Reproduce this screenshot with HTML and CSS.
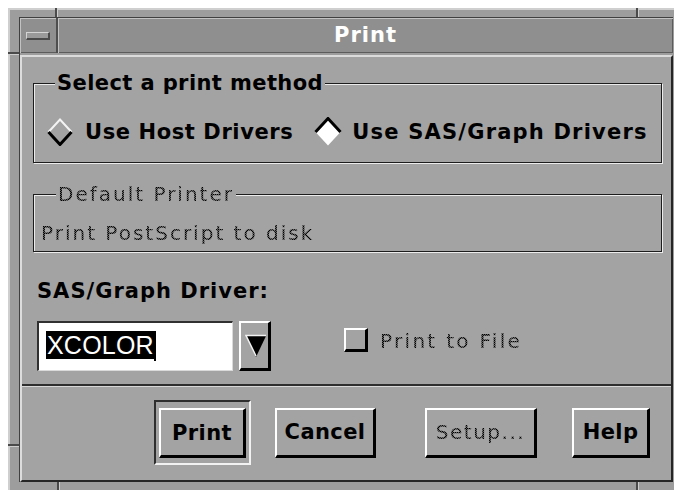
FILE: index.html
```html
<!DOCTYPE html>
<html lang="en">
<head>
<meta charset="utf-8">
<title>Print</title>
<link rel="stylesheet" href="styles.css">
</head>
<body>
<div class="window">
  <!-- resize-handle notches cut into the window frame -->
  <span class="notch notch-v notch-top-left"></span>
  <span class="notch notch-v notch-top-right"></span>
  <span class="notch notch-h notch-left-top"></span>
  <span class="notch notch-h notch-left-bottom"></span>
  <span class="notch notch-v notch-bottom-left"></span>
  <span class="notch notch-v notch-bottom-right"></span>

  <div class="frame-body">
    <div class="titlebar">
      <div class="menu-btn"><span class="menu-bar"></span></div>
      <div class="title">Print</div>
    </div>

    <div class="client">
      <fieldset class="group method">
        <legend class="legend">Select a print method</legend>
        <div class="radios">
          <label class="radio">
            <svg class="diamond" width="26" height="28" viewBox="0 0 26 28">
              <polyline points="1.5,14 13,1.5 24.5,14" fill="none" stroke="#f4f4f4" stroke-width="2"/>
              <polyline points="1.5,14 13,26.5 24.5,14" fill="none" stroke="#000" stroke-width="3"/>
            </svg>
            <span>Use Host Drivers</span>
          </label>
          <label class="radio radio-on">
            <svg class="diamond" width="28" height="30" viewBox="0 0 28 30">
              <polygon points="1.5,15 14,1.5 26.5,15 14,28.5" fill="#fff"/>
              <polyline points="1.5,15 14,1.5 26.5,15" fill="none" stroke="#000" stroke-width="3"/>
            </svg>
            <span>Use SAS/Graph Drivers</span>
          </label>
        </div>
      </fieldset>

      <fieldset class="group printer">
        <legend class="legend legend-off"><span class="stipple">Default Printer</span></legend>
        <div class="printer-name stipple">Print PostScript to disk</div>
      </fieldset>

      <div class="driver-label">SAS/Graph Driver:</div>

      <div class="driver-row">
        <div class="combo">
          <div class="field"><span class="sel">XCOLOR</span><span class="caret"></span></div>
          <div class="drop">
            <svg width="22" height="24" viewBox="0 0 22 24">
              <polygon points="1,2 21,2 11,23" fill="#000"/>
              <polyline points="11,22 1,1.5 21,1.5" fill="none" stroke="#f2f2f2" stroke-width="1.5"/>
            </svg>
          </div>
        </div>
        <div class="check">
          <span class="checkbox"></span>
          <span class="check-text stipple">Print to File</span>
        </div>
      </div>

      <div class="separator"></div>

      <div class="actions">
        <div class="default-frame"><button class="btn btn-print">Print</button></div>
        <button class="btn btn-cancel">Cancel</button>
        <button class="btn btn-setup"><span class="stipple">Setup...</span></button>
        <button class="btn btn-help">Help</button>
      </div>
    </div>
  </div>
</div>
</body>
</html>
```

FILE: styles.css
```css
* { box-sizing: border-box; }

html, body { margin: 0; padding: 0; }

body {
  width: 674px;
  height: 490px;
  overflow: hidden;
  background: #ffffff;
  font-family: "DejaVu Sans", "Liberation Sans", sans-serif;
  color: #000;
}

/* window-manager frame */
.window {
  position: relative;
  margin: 8px 0 0 8px;
  width: 690px;
  height: 500px;
  background: #9d9d9d;
  border-top: 2px solid #cfcfcf;
  border-left: 2px solid #cfcfcf;
  padding: 7px 0 0 9px;
}

.notch { position: absolute; }
.notch-v {
  width: 3px;
  height: 9px;
  border-left: 2px solid #4a4a4a;
  border-right: 1px solid #cdcdcd;
}
.notch-h {
  width: 11px;
  height: 3px;
  border-top: 2px solid #4a4a4a;
  border-bottom: 1px solid #cdcdcd;
  left: -2px;
}
.notch-top-left { left: 45px; top: -2px; }
.notch-top-right { left: 626px; top: -2px; }
.notch-left-top { top: 42px; }
.notch-left-bottom { top: 434px; }
.notch-bottom-left { left: 47px; top: 472px; height: 12px; }
.notch-bottom-right { left: 626px; top: 472px; height: 12px; }

.frame-body {
  width: 654px;
  border-left: 1px solid #404040;
  border-top: 1px solid #404040;
}

/* title bar */
.titlebar {
  display: flex;
  height: 35px;
  background: #8f8f8f;
  box-shadow: inset 1px 1px 0 #c2c2c2, inset -1px -1px 0 #5c5c5c;
}

.menu-btn {
  width: 38px;
  display: flex;
  align-items: center;
  justify-content: center;
  border-right: 2px solid #4e4e4e;
  box-shadow: 1px 0 0 #c2c2c2;
}

.menu-bar {
  width: 24px;
  height: 8px;
  background: #9a9a9a;
  border-top: 1px solid #d4d4d4;
  border-left: 1px solid #d4d4d4;
  border-bottom: 2px solid #4a4a4a;
  border-right: 2px solid #4a4a4a;
}

.title {
  flex: 1;
  text-align: center;
  color: #fff;
  font-weight: bold;
  font-size: 21px;
  line-height: 35px;
  letter-spacing: 1px;
}

/* dialog body */
.client {
  margin-top: 2px;
  height: 427px;
  background: #a3a3a3;
  border-top: 2px solid #dcdcdc;
  border-left: 2px solid #dcdcdc;
  border-bottom: 2px solid #262626;
  border-right: 2px solid #262626;
  display: flex;
  flex-direction: column;
}

.group {
  margin: 14px 9px 0 11px;
  border: 1px solid #1c1c1c;
  box-shadow: inset 1px 1px 0 #ececec, 1px 1px 0 #ececec;
  min-width: 0;
}

.legend {
  padding: 0 2px;
  background: #a3a3a3;
  line-height: 24px;
  font-weight: bold;
  font-size: 21px;
  letter-spacing: 0.4px;
}

.method { padding: 23px 8px 16px 13px; }
.method .legend { margin-left: 8px; }

.radios {
  display: flex;
  align-items: center;
  height: 28px;
  gap: 21px;
}

.radio {
  display: flex;
  align-items: center;
  gap: 12px;
  font-weight: bold;
  font-size: 21px;
  letter-spacing: 0.6px;
}

.radio-on { gap: 10px; letter-spacing: 1.2px; }

.diamond { display: block; }

.printer {
  margin-top: 19px;
  padding: 15px 8px 6px 7px;
}

.legend-off {
  margin-left: 15px;
  font-weight: normal;
  font-size: 20px;
  letter-spacing: 2px;
}

.printer-name {
  font-size: 20px;
  line-height: 24px;
  letter-spacing: 2px;
}

/* greyed-out text drawn with a 50% pixel stipple */
.stipple {
  color: transparent;
  background-image: conic-gradient(#000 0 25%, #5e5e5e 0 50%, #000 0 75%, #5e5e5e 0);
  background-size: 2px 2px;
  -webkit-background-clip: text;
  background-clip: text;
}

.driver-label {
  margin: 27px 0 0 15px;
  line-height: 24px;
  font-weight: bold;
  font-size: 21px;
  letter-spacing: 1px;
}

.driver-row {
  display: flex;
  align-items: flex-start;
  margin: 18px 0 0 15px;
  height: 50px;
}

.combo {
  display: flex;
  gap: 6px;
}

.field {
  width: 196px;
  height: 50px;
  background: #fff;
  border-top: 2px solid #303030;
  border-left: 2px solid #303030;
  border-right: 1px solid #dadada;
  border-bottom: 1px solid #dadada;
  padding: 8px 0 0 7px;
  display: flex;
  align-items: flex-start;
}

.sel {
  background: #000;
  color: #fff;
  font-family: "Liberation Sans", Arial, sans-serif;
  font-size: 25px;
  line-height: 28px;
  letter-spacing: 0.2px;
  padding-left: 1px;
}

.caret {
  width: 2px;
  height: 30px;
  background: #000;
}

.drop {
  width: 32px;
  height: 50px;
  background: #a3a3a3;
  border-top: 2px solid #fff;
  border-left: 2px solid #fff;
  border-right: 3px solid #000;
  border-bottom: 3px solid #000;
  display: flex;
  align-items: center;
  justify-content: center;
}

.drop svg { display: block; margin-left: 2px; }

.check {
  display: flex;
  align-items: center;
  gap: 12px;
  margin: 5px 0 0 73px;
}

.checkbox {
  width: 24px;
  height: 24px;
  border-top: 2px solid #fff;
  border-left: 2px solid #fff;
  border-right: 3px solid #000;
  border-bottom: 3px solid #000;
}

.check-text {
  font-size: 20px;
  line-height: 24px;
  letter-spacing: 2.3px;
  margin-top: 3px;
}

.separator {
  margin-top: 13px;
  height: 3px;
  border-top: 2px solid #2e2e2e;
  border-bottom: 1px solid #d8d8d8;
}

/* push buttons */
.actions {
  display: flex;
  align-items: center;
  padding: 13px 0 13px 132px;
}

.default-frame {
  border-top: 2px solid #2e2e2e;
  border-left: 2px solid #2e2e2e;
  border-bottom: 2px solid #f2f2f2;
  border-right: 2px solid #f2f2f2;
  padding: 6px 3px 5px 3px;
}

.btn {
  display: block;
  height: 50px;
  padding: 0;
  background: #a3a3a3;
  border-top: 2px solid #fff;
  border-left: 2px solid #fff;
  border-right: 3px solid #000;
  border-bottom: 3px solid #000;
  font-family: "DejaVu Sans", "Liberation Sans", sans-serif;
  font-weight: bold;
  font-size: 21px;
  letter-spacing: 0.4px;
  color: #000;
}

.btn-print { width: 87px; }
.btn-cancel { width: 101px; margin-left: 24px; }
.btn-setup {
  width: 112px;
  margin-left: 49px;
  font-weight: normal;
  font-size: 20px;
  letter-spacing: 1.5px;
}
.btn-help { width: 78px; margin-left: 35px; }
```
